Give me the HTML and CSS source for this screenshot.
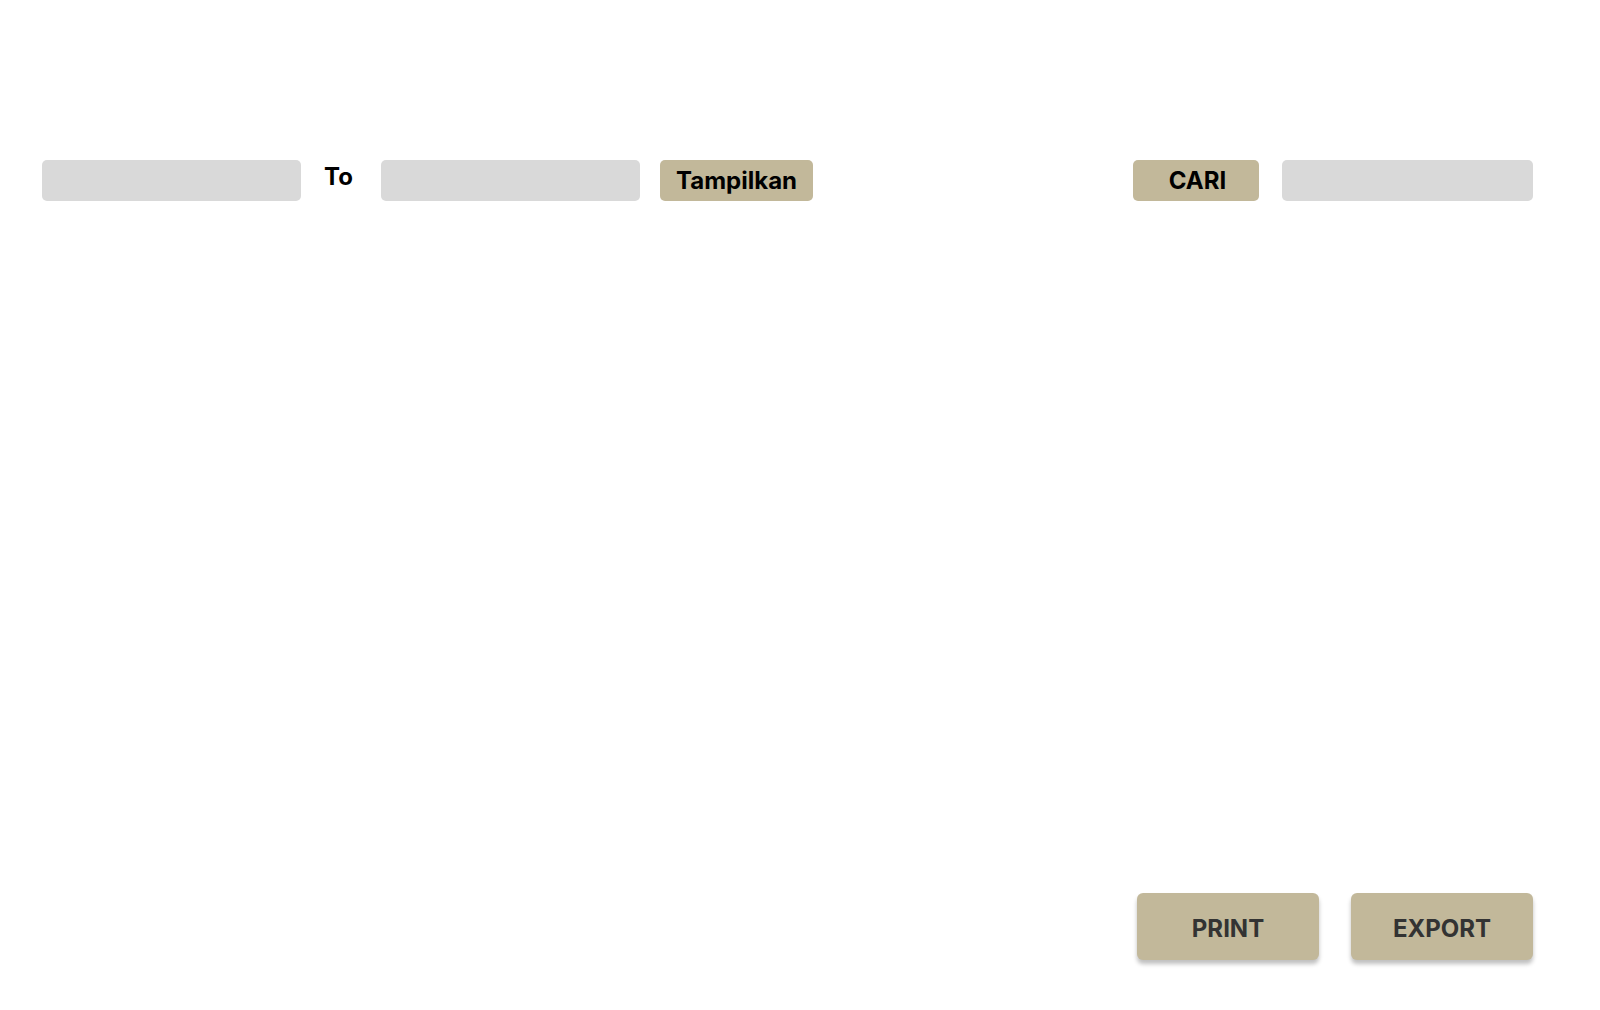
FILE: index.html
```html
<!DOCTYPE html>
<html>
<head>
<meta charset="utf-8">
<link rel="stylesheet" href="styles.css">
</head>
<body>
<div class="page">
  <div class="toolbar">
    <div class="left">
      <div class="field"></div>
      <span class="to">To</span>
      <div class="field"></div>
      <button class="btn tampil">Tampilkan</button>
    </div>
    <div class="right">
      <button class="btn cari">CARI</button>
      <div class="field search"></div>
    </div>
  </div>
  <div class="spacer"></div>
  <div class="actions">
    <button class="big">PRINT</button>
    <button class="big">EXPORT</button>
  </div>
</div>
</body>
</html>
```
FILE: styles.css
```css
html, body {
  margin: 0;
  padding: 0;
  background: #fff;
  font-family: Inter, "Noto Sans", sans-serif;
}
.page {
  width: 1600px;
  height: 1010px;
  box-sizing: border-box;
  padding: 160px 67px 50px 42px;
  display: flex;
  flex-direction: column;
}
.toolbar {
  display: flex;
  justify-content: space-between;
  align-items: center;
  height: 41px;
}
.left, .right {
  display: flex;
  align-items: center;
}
.field {
  width: 259px;
  height: 41px;
  background: #d9d9d9;
  border-radius: 5px;
}
.field.search {
  width: 251px;
  margin-left: 23px;
}
.to {
  width: 80px;
  box-sizing: border-box;
  padding-right: 5px;
  text-align: center;
  font-size: 24px;
  font-weight: 700;
  color: #000;
  position: relative;
  top: -4px;
}
.btn {
  height: 41px;
  border: none;
  border-radius: 5px;
  background: #c2b89a;
  font-family: Inter, sans-serif;
  font-weight: 700;
  font-size: 24px;
  color: #000;
  padding: 0;
}
.tampil {
  width: 153px;
  margin-left: 20px;
}
.cari {
  width: 126px;
  padding-left: 3px;
}
.spacer {
  flex: 1;
}
.actions {
  display: flex;
  justify-content: flex-end;
  gap: 32px;
}
.big {
  width: 182px;
  height: 67px;
  border: none;
  border-radius: 6px;
  background: #c2b89a;
  box-shadow: 0 4px 4px rgba(0,0,0,0.25);
  font-family: Inter, sans-serif;
  font-weight: 700;
  font-size: 24px;
  color: #333;
  padding: 0;
  padding-top: 4px;
}
```
